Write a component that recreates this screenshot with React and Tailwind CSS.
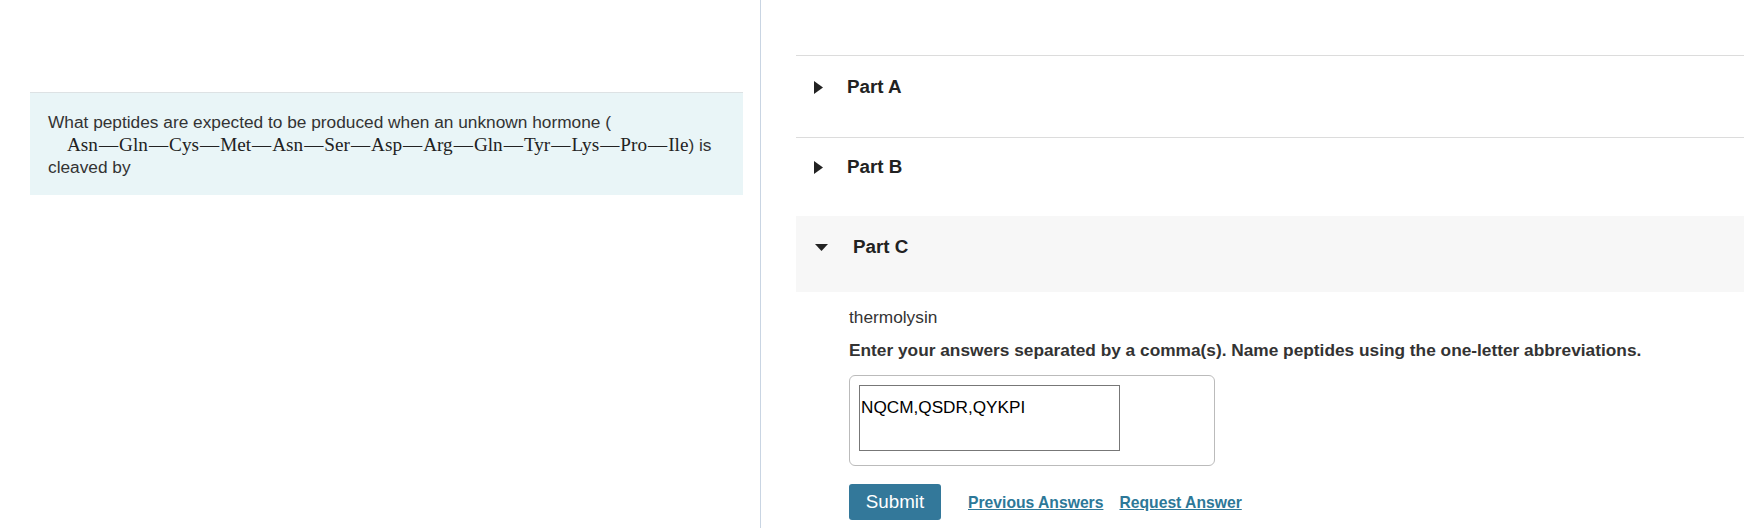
import React from "react";

const words = ["Asn","Gln","Cys","Met","Asn","Ser","Asp","Arg","Gln","Tyr","Lys","Pro","Ile"];

function RightTri() {
  return (
    <svg width="9" height="13" viewBox="0 0 9 13" className="shrink-0">
      <path d="M0 0 L9 6.5 L0 13 Z" fill="#222" />
    </svg>
  );
}
function DownTri() {
  return (
    <svg width="13" height="7" viewBox="0 0 13 7" className="shrink-0">
      <path d="M0 0 L13 0 L6.5 7 Z" fill="#222" />
    </svg>
  );
}

export default function App() {
  return (
    <div className="flex w-[1744px] h-[528px] overflow-hidden bg-white text-[#333] font-['Liberation_Sans',Arial,sans-serif]">
      {/* Left column */}
      <div className="w-[760px] shrink-0 pt-[92px] pl-[30px] pr-[17px]">
        <div className="h-[103px] border-t border-[#dde2e4] bg-[#e9f5f7] pl-[18px] pt-[18px] text-[17.3px] leading-[22px]">
          <div>What peptides are expected to be produced when an unknown hormone (</div>
          <div className="pl-[19px] h-[23px] leading-[23px] whitespace-nowrap">
            <span className="font-['Liberation_Serif','Times_New_Roman',serif] text-[19.2px] text-[#222]">
              {words.map((w, i) => (
                <React.Fragment key={i}>
                  {i > 0 && <span className="mx-[1px]">—</span>}
                  <span>{w}</span>
                </React.Fragment>
              ))}
            </span>
            <span>) is</span>
          </div>
          <div>cleaved by</div>
        </div>
      </div>

      {/* Divider */}
      <div className="w-px shrink-0 bg-[#c9d5e3]" />

      {/* Right column */}
      <div className="flex-1 pl-[35px] pt-[55px]">
        <div className="h-[82px] border-t border-[#dcdcdc] flex items-start pl-[18px] pt-[21px]">
          <div className="h-[20px] flex items-center"><RightTri /></div>
          <div className="ml-[24px] text-[18.8px] leading-[20px] font-bold text-[#222]">Part A</div>
        </div>
        <div className="h-[79px] border-t border-[#dcdcdc] flex items-start pl-[18px] pt-[19px]">
          <div className="h-[20px] flex items-center"><RightTri /></div>
          <div className="ml-[24px] text-[18.8px] leading-[20px] font-bold text-[#222]">Part B</div>
        </div>
        <div className="h-[76px] bg-[#f7f7f7] flex items-start pl-[19px] pt-[21px]">
          <div className="h-[20px] flex items-center"><DownTri /></div>
          <div className="ml-[25px] text-[18.8px] leading-[20px] font-bold text-[#222]">Part C</div>
        </div>
        <div className="pl-[53px] pt-[15px]">
          <div className="text-[17.3px] leading-[20px]">thermolysin</div>
          <div className="mt-[13px] text-[17.3px] leading-[20px] font-bold">
            Enter your answers separated by a comma(s). Name peptides using the one-letter abbreviations.
          </div>
          <div className="mt-[15px] w-[366px] h-[91px] border border-[#bbbbbb] rounded-[6px] pl-[9px] pt-[9px]">
            <div className="w-[261px] h-[66px] border border-[#777] pl-[1px] pt-[12px] text-[17.2px] leading-[19px] text-black">
              NQCM,QSDR,QYKPI
            </div>
          </div>
          <div className="mt-[18px] flex items-center">
            <button className="w-[92px] h-[36px] bg-[#33789a] rounded-[3px] text-white text-[18.8px] leading-[20px]">
              Submit
            </button>
            <a className="ml-[27px] mt-[2px] text-[15.7px] font-bold underline text-[#2d7898]">Previous Answers</a>
            <a className="ml-[16px] mt-[2px] text-[15.7px] font-bold underline text-[#2d7898]">Request Answer</a>
          </div>
        </div>
      </div>
    </div>
  );
}
